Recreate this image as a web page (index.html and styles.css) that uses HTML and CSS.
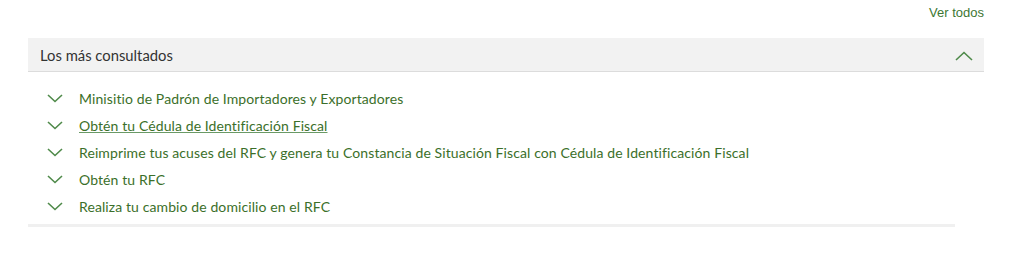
FILE: index.html
```html
<!DOCTYPE html>
<html lang="es">
<head>
<meta charset="utf-8">
<link rel="stylesheet" href="styles.css">
</head>
<body>
<div class="page">
  <div class="top"><a class="ver" href="#">Ver todos</a></div>
  <div class="panel">
    <div class="head">
      <span class="title">Los más consultados</span>
      <svg class="up" width="18" height="10" viewBox="0 0 18 10"><path d="M1 9 L9 1.5 L17 9" fill="none" stroke="#4f8a4a" stroke-width="1.6"/></svg>
    </div>
    <ul class="list">
      <li><svg class="down" width="16" height="9" viewBox="0 0 16 9"><path d="M1 1 L8 7.5 L15 1" fill="none" stroke="#4f8a4a" stroke-width="1.6"/></svg><a href="#">Minisitio de Padrón de Importadores y Exportadores</a></li>
      <li><svg class="down" width="16" height="9" viewBox="0 0 16 9"><path d="M1 1 L8 7.5 L15 1" fill="none" stroke="#4f8a4a" stroke-width="1.6"/></svg><a class="u" href="#">Obtén tu Cédula de Identificación Fiscal</a></li>
      <li><svg class="down" width="16" height="9" viewBox="0 0 16 9"><path d="M1 1 L8 7.5 L15 1" fill="none" stroke="#4f8a4a" stroke-width="1.6"/></svg><a href="#">Reimprime tus acuses del RFC y genera tu Constancia de Situación Fiscal con Cédula de Identificación Fiscal</a></li>
      <li><svg class="down" width="16" height="9" viewBox="0 0 16 9"><path d="M1 1 L8 7.5 L15 1" fill="none" stroke="#4f8a4a" stroke-width="1.6"/></svg><a href="#">Obtén tu RFC</a></li>
      <li><svg class="down" width="16" height="9" viewBox="0 0 16 9"><path d="M1 1 L8 7.5 L15 1" fill="none" stroke="#4f8a4a" stroke-width="1.6"/></svg><a href="#">Realiza tu cambio de domicilio en el RFC</a></li>
    </ul>
    <div class="rule"></div>
  </div>
</div>
</body>
</html>
```
FILE: styles.css
```css
html, body { margin: 0; padding: 0; background: #fff; }
.page { padding: 0 40px 0 28px; }
.top { display: flex; justify-content: flex-end; height: 38px; padding-top: 4px; box-sizing: border-box; }
.ver { font-family: "Liberation Sans", Arial, sans-serif; font-size: 13px; color: #3d7733; text-decoration: none; line-height: 18px; }
.head { display: flex; align-items: center; justify-content: space-between; height: 33px; background: #f2f2f2; border-bottom: 1px solid #dcdcdc; padding: 0 11px 0 12px; }
.title { font-family: Lato, "Noto Sans", sans-serif; font-size: 14.8px; color: #333; }
.up { margin-top: 2px; }
.list { list-style: none; margin: 0; padding: 13px 0 0 19px; }
.list li { display: flex; align-items: center; height: 27px; }
.down { margin-right: 16px; flex: none; }
.list a { font-family: Lato, "Noto Sans", sans-serif; font-size: 14px; letter-spacing: 0.1px; color: #3b6f2a; text-decoration: none; }
.list a.u { text-decoration: underline; text-decoration-color: #6a9a66; }
.rule { height: 3px; background: #f0f0f0; margin: 4px 29px 0 0; }
```
